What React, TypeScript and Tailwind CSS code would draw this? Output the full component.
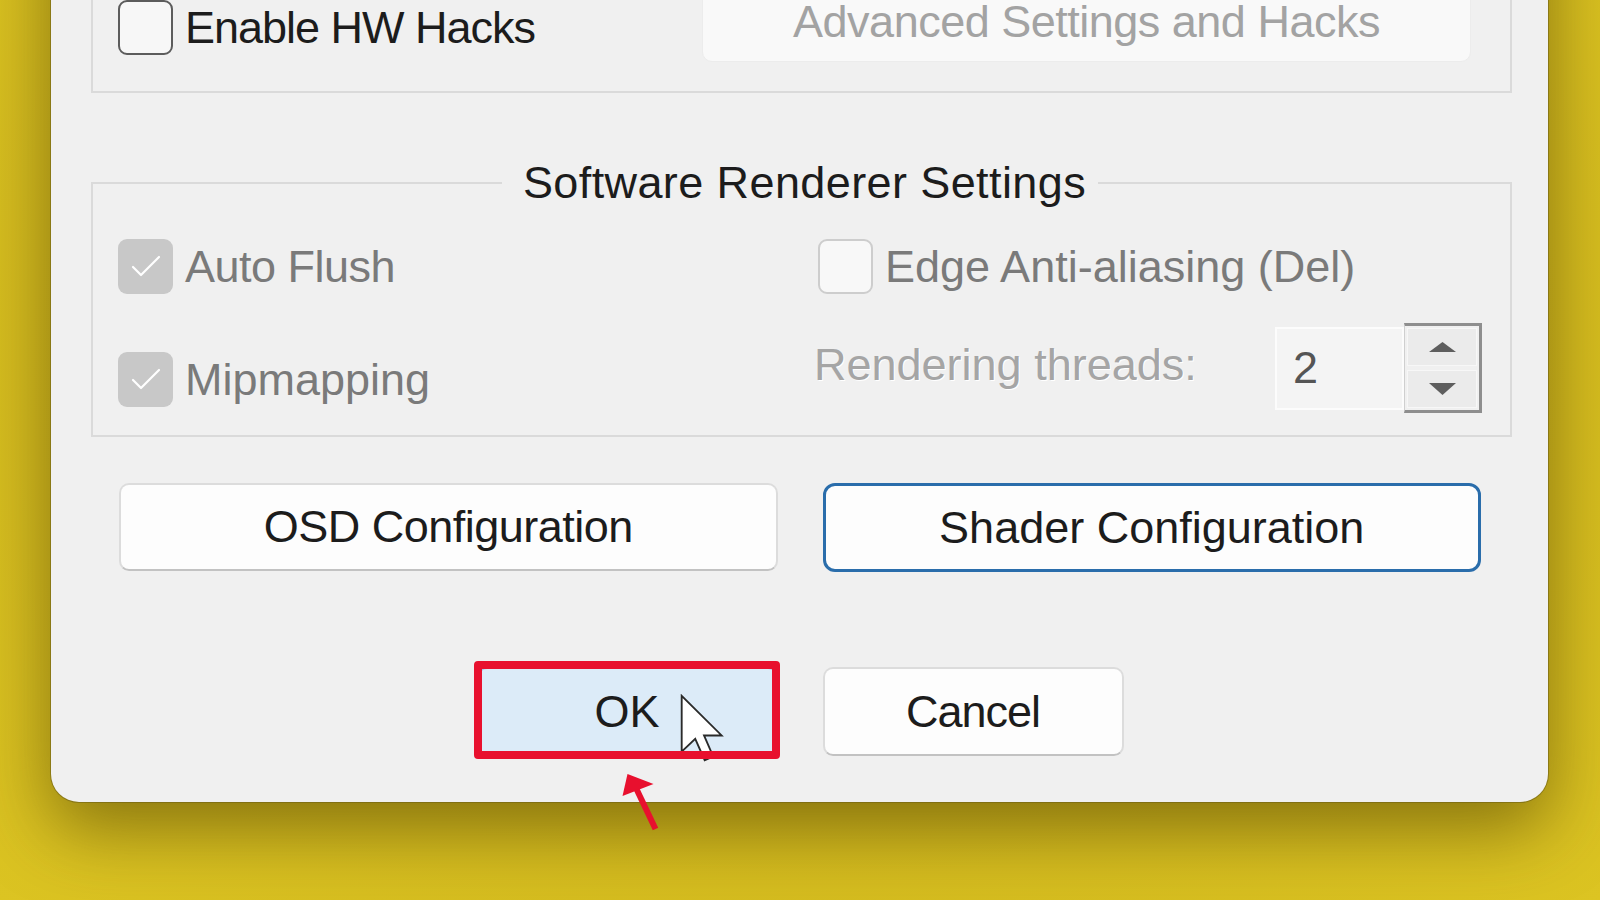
import clsx from "clsx";

type BoxState = "off" | "off-disabled" | "on-disabled";

function CheckBox({ state, label, labelClass }: { state: BoxState; label: string; labelClass?: string }) {
  return (
    <div className="flex items-center gap-[12px]">
      <span
        className={clsx(
          "flex h-[55px] w-[55px] shrink-0 items-center justify-center rounded-[9px]",
          state === "off" && "border-2 border-[#5c5c5c] bg-[#f7f7f7]",
          state === "off-disabled" && "border-2 border-[#cdcdcd] bg-[#f8f8f8]",
          state === "on-disabled" && "bg-[#c8c8c8]",
        )}
      >
        {state === "on-disabled" && (
          <svg viewBox="0 0 55 55" className="h-[55px] w-[55px]">
            <path d="M15 28 L23 36 L41 18" fill="none" stroke="#ffffff" strokeWidth="2.2" strokeLinecap="round" strokeLinejoin="round" />
          </svg>
        )}
      </span>
      <span className={clsx("whitespace-nowrap leading-[52px]", labelClass)}>{label}</span>
    </div>
  );
}

function SpinBox({ value }: { value: string }) {
  return (
    <div className="flex h-[90px] items-center">
      <div className="flex h-[83px] w-[129px] items-center border-2 border-[#fcfcfc] bg-[#f4f4f4] pl-[16px] text-[#555555]">
        {value}
      </div>
      <div className="flex h-[90px] w-[78px] flex-col gap-[4px] border-[3px] border-l border-[#8e8e8e] border-l-[#cfcfcf] p-[2px]">
        <div className="flex flex-1 items-center justify-center border border-[#f7f7f7] bg-[#ebebeb]">
          <svg viewBox="0 0 27 10" className="h-[10px] w-[27px]">
            <polygon points="13.5,0 27,10 0,10" fill="#5e5e5e" />
          </svg>
        </div>
        <div className="flex flex-1 items-center justify-center border border-[#f7f7f7] bg-[#ebebeb]">
          <svg viewBox="0 0 27 12" className="h-[12px] w-[27px]">
            <polygon points="0,0 27,0 13.5,12" fill="#5e5e5e" />
          </svg>
        </div>
      </div>
    </div>
  );
}

export default function App() {
  return (
    <div className="h-[900px] w-[1600px] overflow-hidden bg-[radial-gradient(ellipse_at_50%_40%,#c7ae1b_0%,#d3ba1e_60%,#dcc422_100%)] font-['Liberation_Sans',Arial,sans-serif] text-[45px]">
      <div className="-mt-[117px] ml-[51px] w-[1497px] rounded-b-[28px] bg-[#f0f0f0] pb-[46px] pl-[40px] pr-[36px] pt-[60px] shadow-[0_0_0_1px_rgba(110,95,20,0.55),0_26px_70px_rgba(70,55,0,0.55)]">
        {/* hardware group (top cut off) */}
        <div className="flex items-start justify-between border-2 border-[#dadada] pb-[29px] pl-[25px] pr-[39px] pt-[37px]">
          <div className="mt-[18px]">
            <CheckBox state="off" label="Enable HW Hacks" labelClass="text-[#1c1c1c] tracking-[-1px]" />
          </div>
          <button className="flex h-[80px] w-[769px] items-center justify-center rounded-[10px] border border-[#ececec] bg-[#f9f9f9] tracking-[-0.5px] text-[#a3a3a3]">
            Advanced Settings and Hacks
          </button>
        </div>

        {/* software renderer group */}
        <fieldset className="mt-[64px] border-2 border-[#dadada] pb-[22px] pl-[25px] pr-[28px] pt-[30px]">
          <legend className="mx-auto pl-[21px] pr-[12px] leading-[52px] tracking-[0.4px] text-[#1c1c1c]">
            Software Renderer Settings
          </legend>
          <div className="grid grid-cols-[700px_1fr]">
            <div className="flex flex-col gap-[58px]">
              <CheckBox state="on-disabled" label="Auto Flush" labelClass="text-[#7a7a7a] tracking-[-0.5px]" />
              <CheckBox state="on-disabled" label="Mipmapping" labelClass="text-[#7a7a7a]" />
            </div>
            <div className="flex flex-col gap-[29px]">
              <CheckBox state="off-disabled" label="Edge Anti-aliasing (Del)" labelClass="text-[#7a7a7a]" />
              <div className="flex items-center justify-between">
                <span className="-ml-[4px] mb-[6px] whitespace-nowrap text-[#a5a5a5] [text-shadow:1px_1px_0_#ffffff]">
                  Rendering threads:
                </span>
                <SpinBox value="2" />
              </div>
            </div>
          </div>
        </fieldset>

        {/* configuration buttons */}
        <div className="ml-[28px] mr-[31px] mt-[46px] grid grid-cols-2 gap-x-[45px]">
          <button className="h-[88px] rounded-[10px] border-2 border-[#dcdcdc] border-b-[#c2c2c2] bg-[#fdfdfd] text-[#1c1c1c] tracking-[-0.5px]">
            OSD Configuration
          </button>
          <button className="h-[89px] rounded-[12px] border-[3px] border-[#2a6dab] bg-[#fdfdfd] text-[#1c1c1c]">
            Shader Configuration
          </button>
        </div>

        {/* OK / Cancel */}
        <div className="ml-[28px] mr-[31px] mt-[95px] grid grid-cols-2 gap-x-[45px]">
          <div className="relative h-[89px] w-[301px] justify-self-end">
            <button className="h-full w-full rounded-[10px] border-2 border-[#9fc4e6] bg-[#dcebf8] text-[#1c1c1c]">OK</button>
            {/* mouse pointer */}
            <svg viewBox="0 0 13 20" className="absolute left-[203px] top-[27px] h-[68px] w-[44px]">
              <path
                d="M0.5 0.5 L0.5 17 L4.5 13.2 L7.3 19.5 L9.8 18.4 L7.1 12.2 L12.3 12.2 Z"
                fill="#ffffff"
                stroke="#2a2a2a"
                strokeWidth="0.55"
              />
            </svg>
            {/* red highlight */}
            <div className="absolute -bottom-[3px] -left-[3px] -right-[2px] -top-[6px] rounded-[4px] border-[8px] border-[#e8102e]" />
            {/* red arrow */}
            <svg viewBox="0 0 50 70" className="absolute left-[140px] top-[100px] h-[70px] w-[50px]">
              <line x1="38.5" y1="62" x2="19" y2="21" stroke="#e8102e" strokeWidth="6" />
              <polygon points="10.5,7 36.5,17 5.5,29" fill="#e8102e" />
            </svg>
          </div>
          <button className="h-[89px] w-[301px] rounded-[10px] border-2 border-[#dcdcdc] border-b-[#c2c2c2] bg-[#fdfdfd] tracking-[-1px] text-[#1c1c1c]">
            Cancel
          </button>
        </div>
      </div>
    </div>
  );
}
